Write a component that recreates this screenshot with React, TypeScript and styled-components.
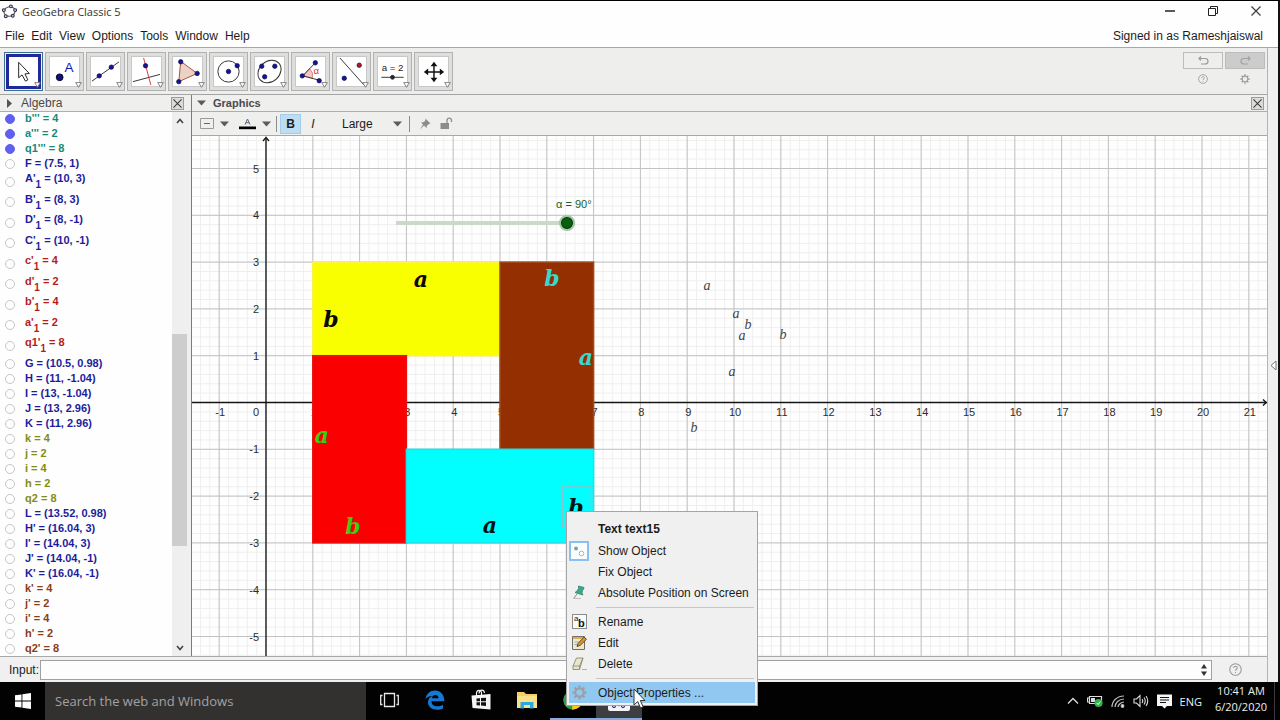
import React, { useLayoutEffect, useRef, useState } from "react";
import styled, { createGlobalStyle, css } from "styled-components";

const GlobalStyle = createGlobalStyle`
  * { box-sizing: border-box; }
  body {
    margin: 0;
    background: #fff;
    font-family: "Liberation Sans", Arial, sans-serif;
    font-size: 12px;
    color: #1c1c1c;
  }
  button, input, select { font: inherit; color: inherit; margin: 0; }
  svg { display: block; flex: none; }
`;

/* ---------- window frame ---------- */

const Screen = styled.div`
  position: relative;
  display: flex;
  flex-direction: column;
  min-height: 100vh;
  overflow: hidden;
`;

const WindowFrame = styled.div`
  flex: 1;
  display: flex;
  flex-direction: column;
  border-top: 1px solid #000;
  border-right: 2px solid #111;
`;

const TitleBar = styled.header`
  display: flex;
  align-items: flex-start;
  height: 23px;
  padding: 3px 1px 0 2px;
  background: #fefefe;
`;

const Title = styled.h1`
  flex: 1;
  margin: 0 0 0 5px;
  font: 11px/16px "Open Sans", "Noto Sans", sans-serif;
  color: #333;
`;

const WindowButton = styled.button`
  display: grid;
  place-items: center;
  width: 43px;
  height: 14px;
  padding: 0;
  border: 0;
  background: none;
`;

const MenuBar = styled.nav`
  display: flex;
  align-items: center;
  height: 23px;
  padding: 0 15px 0 5px;
  gap: 7px;
  background: #fefefe;
`;

const MenuButton = styled.button`
  padding: 0;
  border: 0;
  background: none;
  line-height: 16px;
`;

const SignedIn = styled.span`
  margin-left: auto;
`;

const Body = styled.div`
  flex: 1;
  display: flex;
  border-top: 1px solid #a8a8a8;
`;

const Main = styled.div`
  flex: 1;
  min-width: 0;
  display: flex;
  flex-direction: column;
  border-right: 1px solid #b4b4b4;
`;

const SideStrip = styled.button`
  display: grid;
  place-items: center;
  width: 10px;
  padding: 0;
  border: 0;
  background: #f0f0f0;
`;

/* ---------- main toolbar ---------- */

const Toolbar = styled.div`
  display: flex;
  align-items: center;
  height: 46px;
  padding: 0 2px 0 4px;
  gap: 2px;
  background: #eeeeec;
`;

const ToolButton = styled.button<{ $active?: boolean }>`
  position: relative;
  display: grid;
  place-items: center;
  width: 39px;
  height: 39px;
  padding: 0;
  border: 1px solid #b2b2b2;
  background: #dededd;
  ${(p) =>
    p.$active &&
    css`
      border-color: #3c7090;
      background: #e8f2f8;
    `}
`;

const ToolFace = styled.span<{ $active?: boolean }>`
  display: grid;
  place-items: center;
  width: ${(p) => (p.$active ? 35 : 31)}px;
  height: ${(p) => (p.$active ? 35 : 31)}px;
  border: ${(p) => (p.$active ? "3px solid #20289a" : "1px solid #c8c8c8")};
  background: #fff;
`;

const Corner = styled.svg`
  position: absolute;
  right: 1px;
  bottom: 2px;
`;

const ToolbarSide = styled.div`
  display: grid;
  grid-template-columns: 40px 40px;
  grid-template-rows: 17px 20px;
  column-gap: 2px;
  margin: 0 0 2px auto;
`;

const SideButton = styled.button<{ $framed?: boolean; $dim?: boolean }>`
  display: grid;
  place-items: center;
  padding: 0;
  border: ${(p) => (p.$framed ? "1px solid #bcbcbc" : "0")};
  background: ${(p) => (p.$dim ? "#cccccc" : "transparent")};
`;

/* ---------- panels ---------- */

const Panels = styled.div`
  flex: 1;
  display: flex;
  border-top: 1px solid #a4a4a4;
`;

const AlgebraPanel = styled.section`
  display: flex;
  flex-direction: column;
  width: 192px;
  border-right: 1px solid #7c7c7c;
  background: #f0f0f0;
`;

const GraphicsPanel = styled.section`
  flex: 1;
  min-width: 0;
  display: flex;
  flex-direction: column;
`;

const PanelHeader = styled.div`
  display: flex;
  align-items: center;
  height: 17px;
  gap: 7px;
  padding: 0 2px 0 5px;
  border-bottom: 1px solid #adadad;
  background: #efefed;
`;

const PanelTitle = styled.h2<{ $strong?: boolean }>`
  flex: 1;
  margin: 0;
  font-size: ${(p) => (p.$strong ? 11 : 12)}px;
  font-weight: ${(p) => (p.$strong ? 700 : 400)};
  line-height: 16px;
  color: #4a4a4a;
`;

const CloseButton = styled.button<{ $inset?: boolean }>`
  display: grid;
  place-items: center;
  width: 13px;
  height: 13px;
  margin-right: ${(p) => (p.$inset ? 5 : 1)}px;
  padding: 0;
  border: 1px solid #9c9c9c;
  background: #dcdcdc;
`;

const AlgebraBody = styled.div`
  flex: 1;
  display: flex;
  margin-right: 4px;
  background: #fdfefd;
`;

const ObjectList = styled.ul`
  flex: 1;
  margin: -1px 0 0;
  padding: 0 0 0 5px;
  list-style: none;
`;

const ObjectRow = styled.li<{ $color: string; $tall?: boolean }>`
  display: flex;
  align-items: center;
  height: ${(p) => (p.$tall ? 20 : 15)}px;
  color: ${(p) => p.$color};
  font-size: 11px;
  font-weight: 700;
  line-height: 15px;
  &:nth-child(odd) {
    height: ${(p) => (p.$tall ? 21 : 15)}px;
  }
`;

const ObjectLabel = styled.label<{ $tall?: boolean }>`
  padding-bottom: ${(p) => (p.$tall ? 6 : 0)}px;
  margin-left: 10px;
  white-space: nowrap;
  sub {
    font-size: 10px;
    line-height: 0;
    vertical-align: -6px;
  }
`;

const Marble = styled.input`
  appearance: none;
  width: 10px;
  height: 10px;
  border: 1px solid #c6c6c6;
  border-radius: 50%;
  background: #fff;
  &:checked {
    border-color: #6060e8;
    background: #6060f0;
  }
`;

const ScrollBar = styled.div`
  display: flex;
  flex-direction: column;
  align-items: center;
  justify-content: space-between;
  width: 15px;
  padding: 6px 0 5px;
  background: #efefef;
`;

const ScrollThumb = styled.div`
  align-self: stretch;
  height: 212px;
  margin-top: 111px;
  background: #cdcdcd;
`;

/* ---------- style bar ---------- */

const StyleBar = styled.div`
  display: flex;
  align-items: center;
  height: 24px;
  padding-left: 8px;
  border-bottom: 1px solid #a8a8a8;
  background: #efefed;
`;

const StyleGroup = styled.div`
  display: flex;
  gap: 10px;
`;

const StyleButton = styled.button<{ $on?: boolean; $width: number }>`
  display: flex;
  align-items: center;
  justify-content: center;
  gap: 6px;
  width: ${(p) => p.$width}px;
  height: 20px;
  padding: 0;
  border: 1px solid ${(p) => (p.$on ? "#a4cdeb" : "transparent")};
  background: ${(p) => (p.$on ? "#bedcf2" : "transparent")};
`;

const Divider = styled.span`
  width: 1px;
  height: 16px;
  margin: 0 3px 0 4px;
  background: #8c8c8c;
`;

const SizeField = styled.label`
  display: flex;
  align-items: center;
  margin: 0 3px 0 17px;
`;

const SizeSelect = styled.select`
  appearance: none;
  width: 51px;
  padding: 0;
  border: 0;
  background: none;
`;

/* ---------- drawing canvas ---------- */

const Canvas = styled.div`
  position: relative;
  flex: 1;
  background: #fefefe;
`;

const Plot = styled.svg`
  position: absolute;
  inset: 0;
  width: 100%;
  height: 100%;
`;

const SliderLabel = styled.label`
  position: absolute;
  left: 364px;
  top: 61px;
  font-size: 11px;
  line-height: 14px;
  color: #17602a;
`;

const AngleSlider = styled.input`
  position: absolute;
  left: 204px;
  top: 79px;
  width: 179px;
  height: 16px;
  appearance: none;
  background: none;
  &::-webkit-slider-runnable-track {
    height: 4px;
    background: #c8dac8;
  }
  &::-webkit-slider-thumb {
    appearance: none;
    width: 16px;
    height: 16px;
    margin-top: -6px;
    border: 2px solid #a8c4a8;
    border-radius: 50%;
    background: #06600c;
    box-shadow: inset 0 0 0 1px #04300a;
  }
`;

/* ---------- input bar ---------- */

const InputBar = styled.div`
  display: flex;
  align-items: center;
  height: 26px;
  padding-left: 9px;
  border-top: 1px solid #a8a8a8;
  background: #f0f0f0;
`;

const InputLabel = styled.label`
  width: 31px;
`;

const InputBox = styled.div`
  flex: 1;
  display: flex;
  align-items: center;
  height: 20px;
  padding-right: 4px;
  border: 1px solid #a0a0a0;
  background: #fdfdfd;
`;

const CommandInput = styled.input`
  flex: 1;
  height: 18px;
  padding: 0 4px;
  border: 0;
  outline: 0;
  background: none;
`;

const HelpButton = styled.button`
  display: grid;
  place-items: center;
  width: 46px;
  margin-right: 9px;
  padding: 0;
  border: 0;
  background: none;
`;

/* ---------- context menu ---------- */

const ContextMenu = styled.div`
  position: absolute;
  left: 566px;
  top: 511px;
  width: 192px;
  padding: 6px 2px 2px;
  border: 1px solid #a4a4a4;
  background: #f0f0f0;
`;

const ContextTitle = styled.div`
  height: 22px;
  padding-left: 29px;
  font-weight: 700;
  line-height: 22px;
`;

const ContextItem = styled.button<{ $hover?: boolean }>`
  display: flex;
  align-items: center;
  gap: 9px;
  width: 100%;
  height: 21px;
  padding: 0;
  border: 0;
  background: ${(p) => (p.$hover ? "#90c8f2" : "transparent")};
  text-align: left;
  white-space: nowrap;
`;

const ItemIcon = styled.span`
  display: grid;
  place-items: center;
  width: 20px;
  height: 20px;
`;

const ContextRule = styled.hr`
  height: 8px;
  margin: 0 1px 0 27px;
  border: 0;
  background: linear-gradient(#c6c6c6, #c6c6c6) 0 4px / 100% 1px no-repeat;
`;

const Pointer = styled.svg`
  position: absolute;
  left: 633px;
  top: 688px;
`;

/* ---------- task bar ---------- */

const TaskBar = styled.footer`
  display: flex;
  height: 38px;
  background: #020202;
  color: #eee;
  font-family: "Open Sans", "Noto Sans", sans-serif;
`;

const StartButton = styled.button`
  display: grid;
  place-items: center;
  width: 45px;
  padding: 0;
  border: 0;
  background: none;
`;

const SearchInput = styled.input`
  width: 321px;
  padding: 0 10px;
  border: 0;
  background: #323130;
  font-size: 13px;
  &::placeholder {
    color: #a2a2a2;
    opacity: 1;
  }
`;

const TaskButton = styled.button<{ $running?: boolean; $active?: boolean }>`
  display: grid;
  place-items: center;
  width: 46px;
  padding: 0;
  border: 0;
  border-bottom: 2px solid ${(p) => (p.$running ? "#86abdc" : "transparent")};
  background: ${(p) => (p.$active ? "#3c3e42" : "transparent")};
`;

const Tray = styled.div`
  display: flex;
  align-items: center;
  gap: 8px;
  margin: 0 5px 0 auto;
  padding-right: 2px;
  border-right: 1px solid #3a3a3a;
  font-size: 11px;
`;

const TrayButton = styled.button`
  display: grid;
  place-items: center;
  padding: 0;
  border: 0;
  background: none;
`;

const Clock = styled.time`
  width: 62px;
  margin-bottom: 4px;
  line-height: 16px;
  text-align: center;
`;

/* ---------- data ---------- */

const TEAL = "#17897a";
const BLUE = "#1d1d9c";
const RED = "#b41c1c";
const OLIVE = "#858c16";
const BROWN = "#8c3c18";

type Entry = { name: string; value: string; color: string; sub?: boolean; on?: boolean };

const entries: Entry[] = [
  { name: "b'''", value: "4", color: TEAL, on: true },
  { name: "a'''", value: "2", color: TEAL, on: true },
  { name: "q1'''", value: "8", color: TEAL, on: true },
  { name: "F", value: "(7.5, 1)", color: BLUE },
  { name: "A'", value: "(10, 3)", color: BLUE, sub: true },
  { name: "B'", value: "(8, 3)", color: BLUE, sub: true },
  { name: "D'", value: "(8, -1)", color: BLUE, sub: true },
  { name: "C'", value: "(10, -1)", color: BLUE, sub: true },
  { name: "c'", value: "4", color: RED, sub: true },
  { name: "d'", value: "2", color: RED, sub: true },
  { name: "b'", value: "4", color: RED, sub: true },
  { name: "a'", value: "2", color: RED, sub: true },
  { name: "q1'", value: "8", color: RED, sub: true },
  { name: "G", value: "(10.5, 0.98)", color: BLUE },
  { name: "H", value: "(11, -1.04)", color: BLUE },
  { name: "I", value: "(13, -1.04)", color: BLUE },
  { name: "J", value: "(13, 2.96)", color: BLUE },
  { name: "K", value: "(11, 2.96)", color: BLUE },
  { name: "k", value: "4", color: OLIVE },
  { name: "j", value: "2", color: OLIVE },
  { name: "i", value: "4", color: OLIVE },
  { name: "h", value: "2", color: OLIVE },
  { name: "q2", value: "8", color: OLIVE },
  { name: "L", value: "(13.52, 0.98)", color: BLUE },
  { name: "H'", value: "(16.04, 3)", color: BLUE },
  { name: "I'", value: "(14.04, 3)", color: BLUE },
  { name: "J'", value: "(14.04, -1)", color: BLUE },
  { name: "K'", value: "(16.04, -1)", color: BLUE },
  { name: "k'", value: "4", color: BROWN },
  { name: "j'", value: "2", color: BROWN },
  { name: "i'", value: "4", color: BROWN },
  { name: "h'", value: "2", color: BROWN },
  { name: "q2'", value: "8", color: BROWN },
];

/* ---------- plot ---------- */

const UNIT = 46.8;
const ORIGIN_X = 74;
const ORIGIN_Y = 266.5;
const px = (x: number) => ORIGIN_X + x * UNIT;
const py = (y: number) => ORIGIN_Y - y * UNIT;
const range = (from: number, to: number) =>
  Array.from({ length: Math.max(0, to - from + 1) }, (_, i) => from + i);

const rects = [
  { x: 1, y: 3, w: 4, h: 2, fill: "#faff00", edge: "#fff04a" },
  { x: 5, y: 3, w: 2, h: 4, fill: "#932f00", edge: "#a04a20" },
  { x: 1, y: 1, w: 2, h: 4, fill: "#fb0000", edge: "#e81010" },
  { x: 3, y: -1, w: 4, h: 2, fill: "#00fffe", edge: "#20e0e8" },
];

const bigLetters = [
  { t: "a", x: 229, y: 151, c: "#0a0a00" },
  { t: "b", x: 139, y: 191, c: "#0a0a00" },
  { t: "b", x: 360, y: 150, c: "#38d8d0" },
  { t: "a", x: 394, y: 229, c: "#38d8d0" },
  { t: "a", x: 130, y: 307, c: "#3ccc10" },
  { t: "b", x: 161, y: 398, c: "#3ccc10" },
  { t: "a", x: 298, y: 397, c: "#001414" },
  { t: "b", x: 384, y: 379, c: "#001414" },
];

const smallLetters = [
  { t: "a", x: 515, y: 154 },
  { t: "a", x: 544, y: 182 },
  { t: "b", x: 556, y: 193 },
  { t: "a", x: 550, y: 204 },
  { t: "b", x: 591, y: 203 },
  { t: "a", x: 540, y: 240 },
  { t: "b", x: 502, y: 296 },
];

function Graph() {
  const ref = useRef<SVGSVGElement>(null);
  const [size, setSize] = useState({ w: 0, h: 0 });

  useLayoutEffect(() => {
    const el = ref.current!;
    const measure = () => {
      const box = el.getBoundingClientRect();
      setSize({ w: box.width, h: box.height });
    };
    measure();
    const observer = new ResizeObserver(measure);
    observer.observe(el);
    return () => observer.disconnect();
  }, []);

  const lastX = Math.floor((size.w - ORIGIN_X - 8) / UNIT);
  const lastY = Math.floor((size.h - ORIGIN_Y - 8) / UNIT);

  return (
    <Plot ref={ref} role="img" aria-label="Coordinate plane with four rectangles">
      {range(-7, lastX * 5 + 5).map((i) => (
        <line key={"mx" + i} x1={px(i / 5)} x2={px(i / 5)} y1="0" y2="100%" stroke="#efefef" />
      ))}
      {range(-lastY * 5 - 5, 28).map((i) => (
        <line key={"my" + i} x1="0" x2="100%" y1={py(i / 5)} y2={py(i / 5)} stroke="#efefef" />
      ))}
      {range(-1, lastX).map((i) => (
        <line key={"x" + i} x1={px(i)} x2={px(i)} y1="0" y2="100%" stroke="#c2c2c2" />
      ))}
      {range(-lastY, 5).map((i) => (
        <line key={"y" + i} x1="0" x2="100%" y1={py(i)} y2={py(i)} stroke="#c2c2c2" />
      ))}
      <g stroke="#161616" strokeWidth="1.3" fill="none">
        <line x1="0" x2="100%" y1={ORIGIN_Y} y2={ORIGIN_Y} />
        <line x1={ORIGIN_X} x2={ORIGIN_X} y1="2" y2="100%" />
        <path d={`M${ORIGIN_X - 3} 5L${ORIGIN_X} 1.500L${ORIGIN_X + 3} 5`} />
        <svg x="100%" y={ORIGIN_Y} overflow="visible">
          <path d="M-4 -3L-0.800 0L-4 3" />
        </svg>
      </g>
      <g fontSize="11" fill="#2c2c2c" textAnchor="middle">
        {range(-1, lastX)
          .filter((i) => i !== 0)
          .map((i) => (
            <text key={i} x={px(i) + 1} y="280">
              {i}
            </text>
          ))}
        <text x="64" y="280">
          0
        </text>
      </g>
      <g fontSize="11" fill="#2c2c2c" textAnchor="end">
        {range(-lastY, 5)
          .filter((i) => i !== 0)
          .map((i) => (
            <text key={i} x="67" y={py(i) + 4}>
              {i}
            </text>
          ))}
      </g>
      {rects.map((r) => (
        <rect
          key={r.fill}
          x={px(r.x)}
          y={py(r.y)}
          width={r.w * UNIT}
          height={r.h * UNIT}
          fill={r.fill}
          stroke={r.edge}
          strokeWidth="1.500"
        />
      ))}
      <rect x="370.500" y="351" width="29" height="40" fill="none" stroke="#86c4cc" strokeWidth="1.500" />
      <g fontStyle="italic" textAnchor="middle">
        <g fontFamily='"DejaVu Serif", serif' fontSize="22" fontWeight="700">
          {bigLetters.map((l, i) => (
            <text key={i} x={l.x} y={l.y} fill={l.c}>
              {l.t}
            </text>
          ))}
        </g>
        <g fontFamily='"Liberation Serif", serif' fontSize="14" fill="#444">
          {smallLetters.map((l, i) => (
            <text key={i} x={l.x} y={l.y}>
              {l.t}
            </text>
          ))}
        </g>
      </g>
    </Plot>
  );
}

/* ---------- icons ---------- */

const Dot = ({ x, y, c = "#14149a" }: { x: number; y: number; c?: string }) => (
  <circle cx={x} cy={y} r="2.300" fill={c} stroke="#0a0a40" strokeWidth="0.700" />
);

const Icon30 = ({ children }: { children: React.ReactNode }) => (
  <svg width="29" height="29" viewBox="0 0 30 30" fill="none" stroke="#333" strokeWidth="1">
    {children}
  </svg>
);

const tools: { name: string; icon: React.ReactNode }[] = [
  {
    name: "Move",
    icon: <path d="M10 5.500V21.500L13.500 18.500L17 25L19.500 23.700L16.500 17.500L21 17Z" fill="#fff" stroke="#222" />,
  },
  {
    name: "Point",
    icon: (
      <>
        <circle cx="10" cy="21" r="3.500" fill="#10107e" stroke="#050530" />
        <text x="15" y="15" fontSize="14" fill="#1414b4" stroke="none">
          A
        </text>
      </>
    ),
  },
  {
    name: "Line",
    icon: (
      <>
        <path d="M1 25L29 5" />
        <Dot x={8.5} y={19.5} />
        <Dot x={21} y={10.5} />
      </>
    ),
  },
  {
    name: "Perpendicular line",
    icon: (
      <>
        <path d="M1 25.500L29 18" />
        <path d="M12 1L19.500 29" stroke="#d43c3c" />
        <Dot x={14} y={9} />
      </>
    ),
  },
  {
    name: "Polygon",
    icon: (
      <>
        <path d="M8 4.500L25 17L6 25.500Z" fill="#ecd2c6" stroke="#a45030" />
        <Dot x={8} y={5} />
        <Dot x={25} y={17} />
        <Dot x={6} y={25.5} />
      </>
    ),
  },
  {
    name: "Circle",
    icon: (
      <>
        <circle cx="15" cy="15" r="11" />
        <Dot x={15} y={15} />
        <Dot x={24} y={9} />
      </>
    ),
  },
  {
    name: "Ellipse",
    icon: (
      <>
        <ellipse cx="15" cy="15" rx="13" ry="10.500" transform="rotate(-42 15 15)" />
        <Dot x={7} y={9.5} />
        <Dot x={20.5} y={9.5} />
        <Dot x={10} y={20.5} />
      </>
    ),
  },
  {
    name: "Angle",
    icon: (
      <>
        <path d="M7 19.500L14 12A10 10 0 0 1 17 22Z" fill="#f8c4c4" stroke="#d06060" strokeWidth="0.700" />
        <path d="M20 6L7 19.500L24 24" />
        <text x="18" y="18" fontSize="10" fill="#e03030" stroke="none">
          α
        </text>
        <Dot x={20} y={6} />
        <Dot x={6.5} y={19.5} />
        <Dot x={24} y={24.5} />
      </>
    ),
  },
  {
    name: "Reflect",
    icon: (
      <>
        <path d="M3 1L28 29" />
        <Dot x={7.5} y={22} />
        <Dot x={23} y={8.5} c="#b41c1c" />
      </>
    ),
  },
  {
    name: "Slider",
    icon: (
      <>
        <text x="15" y="14" fontSize="10" textAnchor="middle" fill="#222" stroke="none">
          a = 2
        </text>
        <path d="M3.500 21H26.500" />
        <circle cx="15" cy="21" r="2" fill="#222" />
      </>
    ),
  },
  {
    name: "Move view",
    icon: (
      <>
        <path d="M7 15.500H24M15.500 7V24" stroke="#111" strokeWidth="1.500" />
        <path
          d="M15.500 5L19 9.500H12ZM15.500 26L19 21.500H12ZM5 15.500L9.500 12V19ZM26 15.500L21.500 12V19Z"
          fill="#111"
          stroke="none"
        />
      </>
    ),
  },
];

const DownArrow = () => (
  <svg width="9" height="6" viewBox="0 0 9 6">
    <path d="M0 0.500H9L4.500 5.500Z" fill="#5c5c5c" />
  </svg>
);

const Cross = ({ size = 9, w = 1.2 }: { size?: number; w?: number }) => (
  <svg width={size} height={size} viewBox="0 0 10 10" stroke="#3c3c3c" strokeWidth={w}>
    <path d="M0.500 0.500L9.500 9.500M9.500 0.500L0.500 9.500" />
  </svg>
);

const HelpIcon = ({ size }: { size: number }) => (
  <svg width={size} height={size} viewBox="0 0 12 12" fill="none" stroke="#9a9a9a" strokeWidth="1">
    <circle cx="6" cy="6" r="5.300" />
    <path d="M4.300 4.700C4.400 2.500 7.700 2.600 7.600 4.600C7.500 5.800 6 5.800 6 7.200M6 8.300V9.300" />
  </svg>
);

const Gear = ({ size, color, ring = 2.4 }: { size: number; color: string; ring?: number }) => (
  <svg width={size} height={size} viewBox="0 0 16 16" fill="none" stroke={color}>
    <circle cx="8" cy="8" r="4.500" strokeWidth={ring} />
    <path
      d="M8 0.500V3M8 13V15.500M0.500 8H3M13 8H15.500M2.700 2.700L4.500 4.500M11.500 11.500L13.300 13.300M13.300 2.700L11.500 4.500M4.500 11.500L2.700 13.300"
      strokeWidth="2.400"
    />
  </svg>
);

const GeoLogo = ({ size }: { size: number }) => (
  <svg width={size} height={size} viewBox="0 0 16 16" fill="none" stroke="#555566" strokeWidth="1.200">
    <ellipse cx="8" cy="8" rx="6" ry="5" transform="rotate(-15 8 8)" />
    <g fill="#dcdcf4" stroke="#33334c">
      <circle cx="9.500" cy="2.500" r="1.500" />
      <circle cx="14" cy="6.500" r="1.500" />
      <circle cx="11.500" cy="12.500" r="1.500" />
      <circle cx="4" cy="13" r="1.500" />
      <circle cx="2" cy="6.500" r="1.500" />
    </g>
  </svg>
);

/* ---------- app ---------- */

export default function App() {
  return (
    <Screen>
      <GlobalStyle />
      <WindowFrame>
        <TitleBar>
          <GeoLogo size={15} />
          <Title>GeoGebra Classic 5</Title>
          <WindowButton aria-label="Minimize">
            <svg width="10" height="2">
              <path d="M0 1H10" stroke="#222" strokeWidth="1.500" />
            </svg>
          </WindowButton>
          <WindowButton aria-label="Restore">
            <svg width="10" height="10" viewBox="0 0 10 10" fill="none" stroke="#222">
              <path d="M0.500 2.500H7.500V9.500H0.500ZM2.500 2.500V0.500H9.500V7.500H7.500" />
            </svg>
          </WindowButton>
          <WindowButton aria-label="Close">
            <Cross size={10} />
          </WindowButton>
        </TitleBar>
        <MenuBar>
          {["File", "Edit", "View", "Options", "Tools", "Window", "Help"].map((m) => (
            <MenuButton key={m}>{m}</MenuButton>
          ))}
          <SignedIn>Signed in as Rameshjaiswal</SignedIn>
        </MenuBar>
        <Body>
          <Main>
            <Toolbar>
              {tools.map((t, i) => (
                <ToolButton key={t.name} $active={i === 0} aria-label={t.name}>
                  <ToolFace $active={i === 0}>
                    <Icon30>{t.icon}</Icon30>
                  </ToolFace>
                  <Corner width="7" height="6" viewBox="0 0 7 6">
                    <path d="M0.700 0.600H6.300L3.500 5.300Z" fill="#fff" stroke="#777" strokeWidth="0.900" />
                  </Corner>
                </ToolButton>
              ))}
              <ToolbarSide>
                <SideButton $framed aria-label="Undo">
                  <svg width="11" height="9" viewBox="0 0 11 9" fill="none" stroke="#9a9a9a" strokeWidth="1.200">
                    <path d="M3 0.500L1 2.500L3 4.500M1 2.500H7C11 2.500 11 8 7 8H3" />
                  </svg>
                </SideButton>
                <SideButton $framed $dim aria-label="Redo">
                  <svg width="11" height="9" viewBox="0 0 11 9" fill="none" stroke="#a2a2a2" strokeWidth="1.200">
                    <path d="M8 0.500L10 2.500L8 4.500M10 2.500H4C0 2.500 0 8 4 8H8" />
                  </svg>
                </SideButton>
                <SideButton aria-label="Help">
                  <HelpIcon size={10} />
                </SideButton>
                <SideButton aria-label="Settings">
                  <Gear size={10} color="#969696" ring={1.6} />
                </SideButton>
              </ToolbarSide>
            </Toolbar>
            <Panels>
              <AlgebraPanel>
                <PanelHeader>
                  <svg width="9" height="9" viewBox="0 0 9 9">
                    <path d="M2 0V9L7 4.500Z" fill="#555" />
                  </svg>
                  <PanelTitle>Algebra</PanelTitle>
                  <CloseButton $inset aria-label="Close Algebra">
                    <Cross />
                  </CloseButton>
                </PanelHeader>
                <AlgebraBody>
                  <ObjectList>
                    {entries.map((e, i) => (
                      <ObjectRow key={e.name + i} $color={e.color} $tall={e.sub}>
                        <Marble type="checkbox" id={"obj" + i} defaultChecked={e.on} />
                        <ObjectLabel htmlFor={"obj" + i} $tall={e.sub}>
                          {e.name}
                          {e.sub && <sub>1</sub>} = {e.value}
                        </ObjectLabel>
                      </ObjectRow>
                    ))}
                  </ObjectList>
                  <ScrollBar>
                    <svg width="8" height="6" viewBox="0 0 8 6" fill="none" stroke="#444" strokeWidth="1.600">
                      <path d="M1 5L4 1.500L7 5" />
                    </svg>
                    <ScrollThumb />
                    <svg width="8" height="6" viewBox="0 0 8 6" fill="none" stroke="#444" strokeWidth="1.600">
                      <path d="M1 1L4 4.500L7 1" />
                    </svg>
                  </ScrollBar>
                </AlgebraBody>
              </AlgebraPanel>
              <GraphicsPanel>
                <PanelHeader>
                  <DownArrow />
                  <PanelTitle $strong>Graphics</PanelTitle>
                  <CloseButton aria-label="Close Graphics">
                    <Cross />
                  </CloseButton>
                </PanelHeader>
                <StyleBar>
                  <StyleGroup>
                    <StyleButton $width={28} aria-label="Background">
                      <svg width="14" height="11" viewBox="0 0 14 11" fill="none" stroke="#9a9a9a">
                        <path d="M0.500 0.500H13.500V10.500H0.500Z" />
                        <path d="M4 5.500H10" stroke="#666" />
                      </svg>
                      <DownArrow />
                    </StyleButton>
                    <StyleButton $width={34} aria-label="Text color">
                      <svg width="17" height="12" viewBox="0 0 17 12">
                        <path d="M6 6.500L8.500 1L11 6.500M7 4.700H10" fill="none" stroke="#5a6878" />
                        <path d="M0 8.500H17V11.200H0Z" fill="#000" />
                      </svg>
                      <DownArrow />
                    </StyleButton>
                  </StyleGroup>
                  <Divider />
                  <StyleButton $on $width={21} aria-label="Bold">
                    <b>B</b>
                  </StyleButton>
                  <StyleButton $width={24} aria-label="Italic">
                    <i>I</i>
                  </StyleButton>
                  <SizeField>
                    <SizeSelect aria-label="Text size" defaultValue="Large">
                      <option>Large</option>
                      <option>Small</option>
                    </SizeSelect>
                    <DownArrow />
                  </SizeField>
                  <Divider />
                  <StyleButton $width={24} aria-label="Pin">
                    <svg width="12" height="12" viewBox="0 0 12 12" fill="#8c8c8c">
                      <path d="M6.500 0.500L11.500 5.500L10 6L8 7.500L7.500 10L5 7.500L1 11.500L4 6.500L2 4.500L5 4L6.500 2Z" />
                    </svg>
                  </StyleButton>
                  <StyleButton $width={18} aria-label="Lock">
                    <svg width="13" height="13" viewBox="0 0 13 13">
                      <path d="M0.500 6H9V12H0.500Z" fill="#8c8c8c" />
                      <path d="M7 6V3A2.300 2.300 0 0 1 11.500 3V5" fill="none" stroke="#8c8c8c" strokeWidth="1.300" />
                    </svg>
                  </StyleButton>
                </StyleBar>
                <Canvas>
                  <Graph />
                  <SliderLabel htmlFor="alpha">α = 90°</SliderLabel>
                  <AngleSlider id="alpha" type="range" min="0" max="90" defaultValue="90" />
                </Canvas>
              </GraphicsPanel>
            </Panels>
            <InputBar>
              <InputLabel htmlFor="command">Input:</InputLabel>
              <InputBox>
                <CommandInput id="command" />
                <svg width="6" height="12" viewBox="0 0 6 12" fill="#333">
                  <path d="M3 0L6 4.500H0ZM3 12L6 7.500H0Z" />
                </svg>
              </InputBox>
              <HelpButton aria-label="Input help">
                <HelpIcon size={13} />
              </HelpButton>
            </InputBar>
          </Main>
          <SideStrip aria-label="Show side panel">
            <svg width="7" height="11" viewBox="0 0 7 11" fill="#fff" stroke="#777">
              <path d="M6 1V10L1 5.500Z" />
            </svg>
          </SideStrip>
        </Body>
      </WindowFrame>

      <TaskBar>
        <StartButton aria-label="Start">
          <svg width="16" height="16" viewBox="0 0 16 16" fill="#fff">
            <path d="M0 2.300L6.500 1.400V7.500H0ZM7.400 1.200L16 0V7.500H7.400ZM0 8.400H6.500V14.600L0 13.700ZM7.400 8.400H16V16L7.400 14.800Z" />
          </svg>
        </StartButton>
        <SearchInput aria-label="Search" placeholder="Search the web and Windows" />
        <TaskButton aria-label="Task view">
          <svg width="19" height="16" viewBox="0 0 19 16" fill="none" stroke="#e8e8e8" strokeWidth="1.300">
            <path d="M4.500 1.500H14.500V14.500H4.500ZM2.500 3.500H0.700V12.500H2.500M16.500 3.500H18.300V12.500H16.500" />
          </svg>
        </TaskButton>
        <TaskButton aria-label="Edge">
          <svg width="20" height="20" viewBox="0 0 20 20" fill="#1478d4">
            <path d="M0.500 9C1.500 3.500 5 0.500 10 0.500C16 0.500 19.500 5 19.300 11.300H6.500C6.500 17 13.500 17.500 18 14.700V18.400C12.500 21 3.500 20 3 12.500C2.900 9.500 4.500 7 7.500 5.700C4.500 6 2 7.200 0.500 9ZM6.800 8.300H13.500C13.500 3.800 7.500 4 6.800 8.300Z" />
          </svg>
        </TaskButton>
        <TaskButton aria-label="Store">
          <svg width="20" height="22" viewBox="0 0 20 22">
            <path d="M0.500 6.500L19.500 5V20.500L1.500 19Z" fill="#f4f4f4" />
            <path
              d="M5.500 7V4C6 0.500 10 0.500 10.500 3.500V6M8 4.500C8.500 0 13 0 13.500 4"
              fill="none"
              stroke="#f4f4f4"
              strokeWidth="1.200"
            />
            <path
              d="M5.500 9.500L9 9.200V12.300H5.500ZM10 9.100L15 8.700V12.300H10ZM5.500 13.300H9V16.500L5.500 16.200ZM10 13.300H15V17L10 16.600Z"
              fill="#111"
            />
          </svg>
        </TaskButton>
        <TaskButton aria-label="File Explorer">
          <svg width="20" height="18" viewBox="0 0 20 18">
            <path d="M0 1H7L9 3H20V17H0Z" fill="#f4cf68" />
            <path d="M0 5H20V17H0Z" fill="#fbe08a" />
            <path d="M3.500 17.500V11H16.500V17.500H13V14H7V17.500Z" fill="#2ca8dc" />
          </svg>
        </TaskButton>
        <TaskButton $running aria-label="Chrome">
          <svg width="20" height="20" viewBox="0 0 20 20">
            <circle cx="10" cy="10" r="9.500" fill="#e04638" />
            <path d="M10 10L1.500 5.500A9.500 9.500 0 0 0 10 19.500L14 12Z" fill="#2da04e" />
            <path d="M10 10H19.500A9.500 9.500 0 0 1 9 19.500Z" fill="#fbc916" />
            <circle cx="10" cy="10" r="4.500" fill="#fff" />
            <circle cx="10" cy="10" r="3.500" fill="#3c7cec" />
          </svg>
        </TaskButton>
        <TaskButton $running $active aria-label="GeoGebra">
          <svg width="22" height="22" viewBox="0 0 22 22">
            <rect width="22" height="22" rx="2" fill="#f4f4f8" />
            <ellipse cx="11" cy="12" rx="6" ry="4.500" fill="none" stroke="#3c3c70" strokeWidth="1.500" />
            <g fill="#a8a8f0" stroke="#3c3c70">
              <circle cx="6" cy="17" r="1.700" />
              <circle cx="15" cy="17" r="1.700" />
              <circle cx="11" cy="6" r="1.700" />
            </g>
          </svg>
        </TaskButton>
        <Tray>
          <TrayButton aria-label="Show hidden icons">
            <svg width="12" height="8" viewBox="0 0 12 8" fill="none" stroke="#ddd" strokeWidth="1.300">
              <path d="M1 6.500L6 1.500L11 6.500" />
            </svg>
          </TrayButton>
          <TrayButton aria-label="Battery">
            <svg width="16" height="14" viewBox="1 0 16 14">
              <path d="M3.500 2.500H15.500V9.500H3.500ZM3.500 4H1.500V8H3.500" fill="none" stroke="#ddd" strokeWidth="1.200" />
              <path d="M5 4H9V8H5Z" fill="#ddd" />
              <circle cx="12.500" cy="9" r="4" fill="#34b44c" />
              <path d="M10.800 9L12 10.500L14.500 7.500" fill="none" stroke="#fff" />
            </svg>
          </TrayButton>
          <TrayButton aria-label="Network">
            <svg width="14" height="13" viewBox="0 0 14 13" fill="none" stroke="#bdbdbd" strokeWidth="1.200">
              <path d="M1 12C1 6 6 1 13 1M4 12C4 8 8 4 13 4M7 12C7 10 10 7 13 7" />
              <circle cx="11.500" cy="11" r="1.300" fill="#eee" />
            </svg>
          </TrayButton>
          <TrayButton aria-label="Volume">
            <svg width="16" height="14" viewBox="0 0 16 14" fill="none" stroke="#ddd" strokeWidth="1.100">
              <path d="M1 5H3.500L7 1.500V12.500L3.500 9H1ZM9 5Q10.500 7 9 9M11 3.500Q13.500 7 11 10.500M13 2Q16.500 7 13 12" />
            </svg>
          </TrayButton>
          <TrayButton aria-label="Notifications">
            <svg width="15" height="15" viewBox="0 0 15 15">
              <path d="M0 0.500H15V12H10L7.500 14.500L5 12H0Z" fill="#f6f6f6" />
              <path d="M3 3.500H12M3 6H12M3 8.500H9" stroke="#111" strokeWidth="1.200" />
            </svg>
          </TrayButton>
          <span>ENG</span>
          <Clock>
            10:41 AM
            <br />
            6/20/2020
          </Clock>
        </Tray>
      </TaskBar>

      <ContextMenu role="menu">
        <ContextTitle>Text text15</ContextTitle>
        <ContextItem role="menuitemcheckbox" aria-checked="true">
          <ItemIcon>
            <svg width="20" height="20" viewBox="0 0 20 20">
              <rect x="1" y="1" width="18" height="18" fill="#fafcfe" stroke="#8cc0ec" strokeWidth="2" />
              <circle cx="7" cy="7.500" r="2" fill="#7ca89c" />
              <circle cx="12.500" cy="12.500" r="2.300" fill="#fff" stroke="#b0b0b0" />
            </svg>
          </ItemIcon>
          Show Object
        </ContextItem>
        <ContextItem role="menuitem">
          <ItemIcon />
          Fix Object
        </ContextItem>
        <ContextItem role="menuitem">
          <ItemIcon>
            <svg width="14" height="15" viewBox="0 0 14 15">
              <path d="M1 13.500H9" stroke="#c0c0c0" />
              <path d="M5.500 8.500L2 13" stroke="#888" />
              <path
                d="M6.500 1L12 2.500L11.500 4.500L10.500 5L10 8L11 10L3 7.500L5 6L6.500 3.500Z"
                fill="#3aa88c"
                stroke="#2c8870"
                strokeWidth="0.800"
              />
            </svg>
          </ItemIcon>
          Absolute Position on Screen
        </ContextItem>
        <ContextRule />
        <ContextItem role="menuitem">
          <ItemIcon>
            <svg width="15" height="15" viewBox="0 0 15 15">
              <rect x="0.500" y="0.500" width="14" height="14" fill="#fafafa" stroke="#8c8c8c" />
              <text x="2" y="7" fontSize="8" fill="#222">
                a
              </text>
              <text x="6" y="13" fontSize="11" fontWeight="700" fill="#111">
                b
              </text>
            </svg>
          </ItemIcon>
          Rename
        </ContextItem>
        <ContextItem role="menuitem">
          <ItemIcon>
            <svg width="15" height="15" viewBox="0 0 15 15">
              <path d="M0.500 1.500H12.500V14.500H0.500Z" fill="#eee8cc" stroke="#707070" />
              <path d="M1 2H12V4H1Z" fill="#d8b050" />
              <path d="M2.500 7H8M2.500 9.500H6" stroke="#aaa" />
              <path d="M5 11.500L6 8.500L12 2L14.500 4.300L8 10.500Z" fill="#d89430" stroke="#5c4420" strokeWidth="0.900" />
            </svg>
          </ItemIcon>
          Edit
        </ContextItem>
        <ContextItem role="menuitem">
          <ItemIcon>
            <svg width="15" height="14" viewBox="0 0 15 14">
              <path d="M10 12.500H15" stroke="#b0b0b0" />
              <path d="M4.500 1H11L7.500 12.500H1V9Z" fill="#e6e6cc" stroke="#8a8a70" strokeWidth="0.900" />
              <path d="M1 9H7.500L11 1M7.500 9V12.500" fill="none" stroke="#8a8a70" strokeWidth="0.800" />
            </svg>
          </ItemIcon>
          Delete
        </ContextItem>
        <ContextRule />
        <ContextItem role="menuitem" $hover>
          <ItemIcon>
            <Gear size={15} color="#9aa0a6" />
          </ItemIcon>
          Object Properties ...
        </ContextItem>
      </ContextMenu>
      <Pointer width="13" height="21" viewBox="0 0 13 21">
        <path d="M1 1V17L4.700 13.500L7.500 20L10.200 18.800L7.300 12.500H12Z" fill="#fff" stroke="#333" />
      </Pointer>
    </Screen>
  );
}
